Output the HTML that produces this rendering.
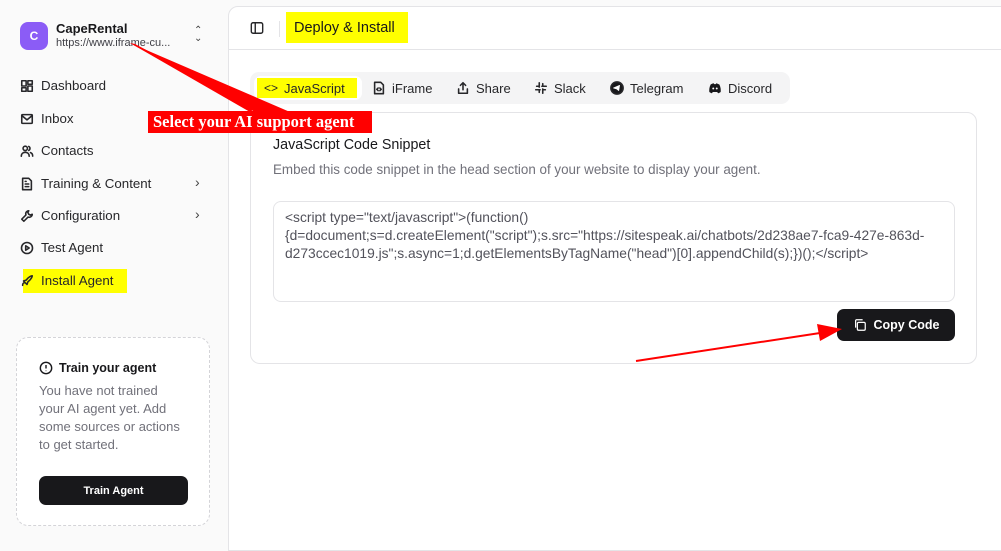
<!DOCTYPE html>
<html><head><meta charset="utf-8"><style>
*{box-sizing:border-box;margin:0;padding:0}
body{width:1001px;height:542px;overflow:hidden;background:#fafafa;font-family:"Liberation Sans",sans-serif;color:#18181b;position:relative}
.abs{position:absolute}
.nav{position:absolute;left:20px;font-size:13.3px;color:#27272a;display:flex;align-items:center;gap:7px}
.nav svg{width:14px;height:14px;fill:none;stroke:#27272a;stroke-width:1.8;stroke-linecap:round;stroke-linejoin:round}
.chev{position:absolute;left:195px;font-size:14px;color:#444}
.main{position:absolute;left:228px;top:6px;width:775px;height:545px;background:#fff;border:1px solid #e4e4e7;border-radius:10px 0 0 0}
.tab{position:absolute;top:80px;font-size:13px;color:#27272a;display:flex;align-items:center;gap:6px;height:16px}
.tab svg{width:14px;height:14px;fill:none;stroke:#27272a;stroke-width:1.8;stroke-linecap:round;stroke-linejoin:round}
</style></head><body>
<div class="abs" style="left:20px;top:22px;width:28px;height:28px;border-radius:8px;background:#8b5cf6;color:#fff;font-size:12px;font-weight:bold;display:flex;align-items:center;justify-content:center">C</div>
<div class="abs" style="left:56px;top:21px;font-size:13px;font-weight:bold">CapeRental</div>
<div class="abs" style="left:56px;top:37px;font-size:11px;color:#3f3f46">https://www.iframe-cu...</div>
<div class="abs" style="left:194px;top:27px;font-size:10px;line-height:8px;color:#444">⌃<br>⌄</div>
<div class="nav" style="top:78px"><svg viewBox="0 0 16 16"><rect x="2" y="2" width="5" height="6"/><rect x="9" y="2" width="5" height="4"/><rect x="2" y="10" width="5" height="4"/><rect x="9" y="8" width="5" height="6"/></svg>Dashboard</div>
<div class="nav" style="top:111px"><svg viewBox="0 0 16 16"><rect x="2" y="3" width="12" height="10" rx="1"/><path d="M2 4l6 5 6-5"/></svg>Inbox</div>
<div class="nav" style="top:143px"><svg viewBox="0 0 16 16"><circle cx="6" cy="5" r="2.5"/><path d="M1.5 14c0-3 2-4.5 4.5-4.5s4.5 1.5 4.5 4.5M10 2.8a2.5 2.5 0 010 4.5M12 9.8c1.5.5 2.5 2 2.5 4"/></svg>Contacts</div>
<div class="nav" style="top:176px"><svg viewBox="0 0 16 16"><path d="M3 1.5h7l3 3V14.5H3z"/><path d="M6 8h4M6 11h4M6 5h1"/></svg>Training &amp; Content</div>
<div class="chev" style="top:174px">›</div>
<div class="nav" style="top:208px"><svg viewBox="0 0 16 16"><path d="M10 2a3.5 3.5 0 00-3.2 4.8L2 11.6 4.4 14l4.8-4.8A3.5 3.5 0 0014 6l-2 1-2-1-1-2z"/></svg>Configuration</div>
<div class="chev" style="top:206px">›</div>
<div class="nav" style="top:240px"><svg viewBox="0 0 16 16"><circle cx="8" cy="8" r="6.3"/><path d="M6.5 5.5l4 2.5-4 2.5z"/></svg>Test Agent</div>
<div class="abs" style="left:23px;top:269px;width:104px;height:24px;background:#ffff00"></div>
<div class="nav" style="top:273px"><svg viewBox="0 0 16 16"><path d="M3 13c0-2 1-3 2-3M6 10l-2-2 3-1c3-4 6-5 7-5 0 1-1 4-5 7l-1 3z"/></svg>Install Agent</div>

<div class="abs" style="left:16px;top:337px;width:194px;height:189px;border:1px dashed #d4d4d8;border-radius:12px;background:#fff"></div>
<div class="abs" style="left:39px;top:361px;font-size:12.5px;font-weight:bold;display:flex;align-items:center;gap:6px"><svg width="14" height="14" viewBox="0 0 16 16" fill="none" stroke="#18181b" stroke-width="1.6"><circle cx="8" cy="8" r="6.5"/><path d="M8 4.5v4M8 11v.5"/></svg>Train your agent</div>
<div class="abs" style="left:39px;top:382px;width:165px;font-size:13px;line-height:18px;color:#71717a">You have not trained<br>your AI agent yet. Add<br>some sources or actions<br>to get started.</div>
<div class="abs" style="left:39px;top:476px;width:149px;height:29px;background:#18181b;border-radius:7px;color:#fff;font-size:11px;font-weight:bold;display:flex;align-items:center;justify-content:center">Train Agent</div>

<div class="main"></div>
<div class="abs" style="left:228px;top:49px;width:773px;height:1px;background:#e4e4e7"></div>
<svg class="abs" style="left:250px;top:21px" width="14" height="14" viewBox="0 0 16 16" fill="none" stroke="#27272a" stroke-width="1.6"><rect x="1.5" y="2" width="13" height="12" rx="2"/><path d="M6 2v12"/></svg>
<div class="abs" style="left:279px;top:21px;width:1px;height:16px;background:#e4e4e7"></div>
<div class="abs" style="left:286px;top:12px;width:122px;height:31px;background:#ffff00"></div>
<div class="abs" style="left:294px;top:19px;font-size:14.5px;line-height:18px">Deploy &amp; Install</div>

<div class="abs" style="left:250px;top:72px;width:540px;height:32px;background:#f4f4f5;border-radius:9px"></div>
<div class="abs" style="left:254px;top:76px;width:108px;height:24px;background:#fff;border-radius:7px"></div>
<div class="abs" style="left:257px;top:78px;width:100px;height:20px;background:#ffff00"></div>
<div class="tab" style="left:264px"><span style="font-size:12px">&lt;&gt;</span> JavaScript</div>
<div class="tab" style="left:372px"><svg viewBox="0 0 16 16"><path d="M3 1.5h7l3 3V14.5H3z"/><path d="M7 8l-1.5 1.5L7 11M9 8l1.5 1.5L9 11"/></svg>iFrame</div>
<div class="tab" style="left:456px"><svg viewBox="0 0 16 16"><path d="M8 10V2M5 5l3-3 3 3M3 9v5h10V9"/></svg>Share</div>
<div class="tab" style="left:534px"><svg viewBox="0 0 16 16"><path d="M6 2v5M10 9v5M2 10h5M9 6h5M3 6h2M11 10h2M6 11v2M10 3v2"/></svg>Slack</div>
<div class="tab" style="left:610px"><svg viewBox="0 0 16 16" style="fill:#18181b"><circle cx="8" cy="8" r="7"/><path d="M4 8l7-3-1 6-2.5-2z" style="stroke:#fff;fill:#fff;stroke-width:.8"/></svg>Telegram</div>
<div class="tab" style="left:708px"><svg viewBox="0 0 16 16" style="fill:#18181b;stroke:none"><path d="M3 4c2-1.3 3.5-1.5 3.5-1.5l.5 1h2l.5-1S11 3 13 4c1.5 3 1.8 6 1.5 8.5-1.5 1-3 1.5-3 1.5l-1-1.5H5.5l-1 1.5S3 13.5 1.5 12.5C1.2 10 1.5 7 3 4z"/><circle cx="6" cy="8.5" r="1.1" fill="#fff"/><circle cx="10" cy="8.5" r="1.1" fill="#fff"/></svg>Discord</div>

<div class="abs" style="left:250px;top:112px;width:727px;height:252px;border:1px solid #e4e4e7;border-radius:10px;background:#fff"></div>
<div class="abs" style="left:273px;top:137px;font-size:14.3px">JavaScript Code Snippet</div>
<div class="abs" style="left:273px;top:162px;font-size:13.4px;color:#71717a;white-space:nowrap">Embed this code snippet in the head section of your website to display your agent.</div>
<div class="abs" style="left:273px;top:201px;width:682px;height:101px;border:1px solid #e4e4e7;border-radius:8px"></div>
<div class="abs" style="left:285px;top:209px;white-space:nowrap;font-size:13.8px;line-height:18px;color:#52525b">&lt;script type="text/javascript"&gt;(function()<br>{d=document;s=d.createElement("script");s.src="https://sitespeak.ai/chatbots/2d238ae7-fca9-427e-863d-<br>d273ccec1019.js";s.async=1;d.getElementsByTagName("head")[0].appendChild(s);})();&lt;/script&gt;</div>
<div class="abs" style="left:837px;top:309px;width:118px;height:32px;background:#18181b;border-radius:7px;color:#fff;font-size:12.5px;font-weight:bold;display:flex;align-items:center;justify-content:center;gap:7px"><svg width="14" height="14" viewBox="0 0 16 16" fill="none" stroke="#fff" stroke-width="1.4"><rect x="5" y="5" width="9" height="9" rx="1.5"/><path d="M3 11V3a1 1 0 011-1h7"/></svg>Copy Code</div>

<svg class="abs" style="left:0;top:0" width="1001" height="542">
<polygon points="130,43 255,112 290,112" fill="#ff0000"/>
<polygon points="130,43 135,44 256,108 250,112" fill="#ff0000"/>
<line x1="636" y1="361" x2="820" y2="333" stroke="#ff0000" stroke-width="2"/>
<polygon points="842,329 817,324 820,341" fill="#ff0000"/>
</svg>
<div class="abs" style="left:148px;top:111px;width:224px;height:22px;background:#ff0000;color:#fff;font-family:'Liberation Serif',serif;font-weight:bold;font-size:16.5px;line-height:22px;padding-left:5px;white-space:nowrap">Select your AI support agent</div>
</body></html>
